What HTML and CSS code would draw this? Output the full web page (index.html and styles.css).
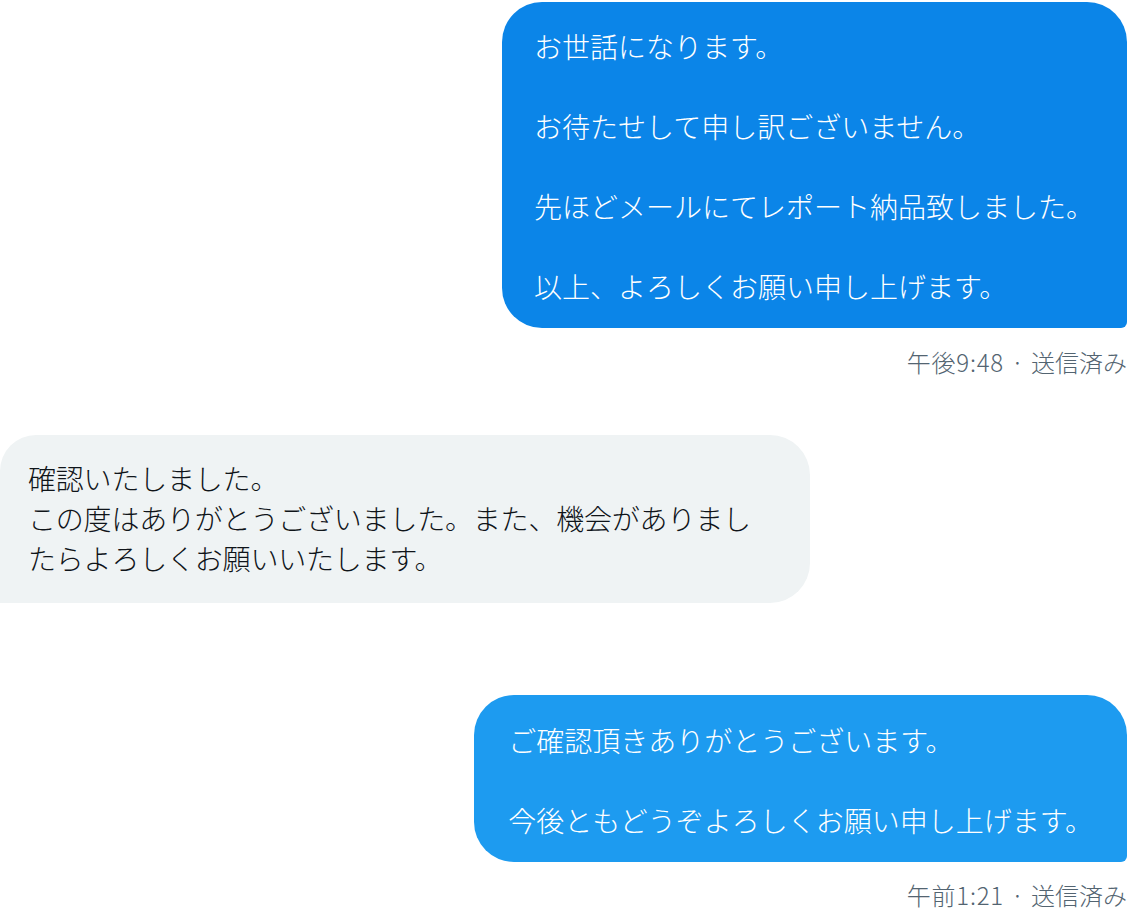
FILE: index.html
```html
<!DOCTYPE html>
<html lang="ja">
<head>
    <meta charset="UTF-8">
    <meta name="viewport" content="width=device-width, initial-scale=1.0">
    <title>メッセージ</title>
    <link rel="stylesheet" href="styles.css">
</head>
<body>
    <div id="thread">
        <div class="message sent first">
            <div class="bubble dark">お世話になります。<br><br>お待たせして申し訳ございません。<br><br>先ほどメールにてレポート納品致しました。<br><br>以上、よろしくお願い申し上げます。</div>
            <div class="meta"><span class="time">午後9:48</span><span class="dot">·</span>送信済み</div>
        </div>

        <div class="message received">
            <div class="bubble">確認いたしました。<br>この度はありがとうございました。また、機会がありましたらよろしくお願いいたします。</div>
        </div>

        <div class="message sent last">
            <div class="bubble">ご確認頂きありがとうございます。<br><br>今後ともどうぞよろしくお願い申し上げます。</div>
            <div class="meta"><span class="time">午前1:21</span><span class="dot">·</span>送信済み</div>
        </div>
    </div>
</body>
</html>
```

FILE: styles.css
```css
body {
    font-family: "Noto Sans CJK JP", "Noto Sans", sans-serif;
    margin: 0;
    padding: 0;
    background-color: #fff;
    color: #0f1419;
}

#thread {
    display: flex;
    flex-direction: column;
    padding: 2px 8px 0 0;
}

.message {
    display: flex;
    flex-direction: column;
}

.message.sent {
    align-items: flex-end;
}

.message.received {
    align-items: flex-start;
    margin-top: 59px;
}

.message.last {
    margin-top: 92px;
}

.bubble {
    font-size: 28px;
    line-height: 40px;
    font-weight: 300;
}

.sent .bubble {
    background-color: #1d9bf0;
    color: #fff;
    border-radius: 40px 40px 6px 40px;
    padding: 25px 34px 22px 34px;
}

.sent .bubble.dark {
    background-color: #0b85e8;
    padding: 24px 33px 22px 32px;
}

.received .bubble {
    background-color: #eff3f4;
    border-radius: 36px 40px 40px 0;
    box-sizing: border-box;
    width: 810px;
    padding: 23px 32px 25px 28px;
    letter-spacing: -0.2px;
}

.meta {
    font-size: 24px;
    line-height: 28px;
    font-weight: 300;
    color: #536471;
    margin-top: 20px;
}

.meta .time {
    letter-spacing: 0.8px;
}

.meta .dot {
    margin: 0 7px;
}

.last .meta {
    margin-top: 19px;
}
```
